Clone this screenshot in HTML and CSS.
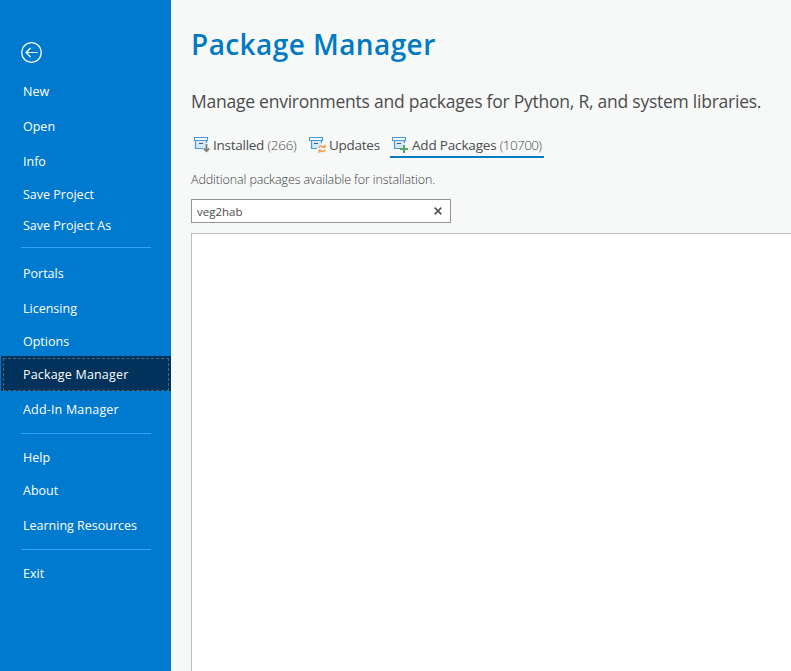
FILE: index.html
```html
<!DOCTYPE html>
<html lang="en">
<head>
<meta charset="utf-8">
<title>Package Manager</title>
<link rel="stylesheet" href="styles.css">
</head>
<body>
<div class="app">
  <nav class="sidebar">
    <a class="back" aria-label="Back"><svg width="22" height="22" viewBox="0 0 22 22" fill="none" stroke="#fff"><circle cx="10.5" cy="10.5" r="9.8" stroke-width="1.3"/><path d="M5 10.5H16.5M9.5 6L5 10.5L9.5 15" stroke-width="1.2"/></svg></a>
    <ul class="group">
      <li><span>New</span></li>
      <li><span>Open</span></li>
      <li><span>Info</span></li>
      <li class="tight"><span>Save Project</span></li>
      <li class="tighter"><span>Save Project As</span></li>
    </ul>
    <ul class="group">
      <li><span>Portals</span></li>
      <li><span>Licensing</span></li>
      <li class="tight"><span>Options</span></li>
      <li class="tight selected"><span class="wide">Package Manager</span></li>
      <li><span class="wide">Add-In Manager</span></li>
    </ul>
    <ul class="group">
      <li><span>Help</span></li>
      <li class="tight"><span>About</span></li>
      <li><span>Learning Resources</span></li>
    </ul>
    <ul class="group">
      <li><span>Exit</span></li>
    </ul>
  </nav>
  <main class="content">
    <h1>Package Manager</h1>
    <p class="lead">Manage environments and packages for Python, R, and system libraries.</p>
    <div class="tabs">
      <div class="tab installed">
        <svg width="18" height="18" viewBox="0 0 18 18" fill="none"><path d="M2.5 4.5H13.5V12.5H2.5Z" fill="#d3e8fa"/><path d="M10 12.5H2.5V4.5M13.5 4.5V7M1.5 1.5H14.5V4.5H1.5Z" stroke="#4a9bd4" stroke-width="1.2"/><path d="M6 7.5H10" stroke="#555"/><path d="M13.5 8V15M10.8 12.5L13.5 15.2L16.2 12.5" stroke="#808080" stroke-width="1.8"/></svg>
        <span class="label">Installed <i>(266)</i></span>
      </div>
      <div class="tab updates">
        <svg width="18" height="18" viewBox="0 0 18 18" fill="none"><path d="M2.5 4.5H12.5V9L9 12.5H2.5Z" fill="#d3e8fa"/><path d="M8 12.5H2.5V4.5M12.5 4.5V7M.5 1.5H13.5V4.5H.5Z" stroke="#4a9bd4" stroke-width="1.2"/><path d="M5 7.5H9" stroke="#555"/><path d="M9.8 12Q10.5 9.8 13.5 9.8L15.5 11M16 8.5V11.5H13M16.2 13.5Q15.5 15.7 12.5 15.7L10.5 14.5M10 17V14H13" stroke="#f09a3e" stroke-width="1.2"/></svg>
        <span class="label">Updates</span>
      </div>
      <div class="tab add">
        <svg width="18" height="18" viewBox="0 0 18 18" fill="none"><path d="M2.5 4.5H12.5V9L9 12.5H2.5Z" fill="#d3e8fa"/><path d="M8 12.5H2.5V4.5M12.5 4.5V7M.5 1.5H13.5V4.5H.5Z" stroke="#4a9bd4" stroke-width="1.2"/><path d="M5 7.5H9" stroke="#555"/><path d="M12 9V17M8 13H16" stroke="#5aa75e" stroke-width="2"/></svg>
        <span class="label">Add Packages <i>(10700)</i></span>
      </div>
    </div>
    <p class="hint">Additional packages available for installation.</p>
    <div class="search"><span>veg2hab</span><svg width="8" height="8" viewBox="0 0 8 8" stroke="#5a5a5a" stroke-width="1.8"><path d="M.7.7L7.3 7.3M7.3.7L.7 7.3"/></svg></div>
    <div class="results"></div>
  </main>
</div>
</body>
</html>
```
FILE: styles.css
```css
* { box-sizing: border-box; }
body { margin: 0; font-family: "Open Sans", "Noto Sans", sans-serif; color: #4c4c4c; background: #f7f9f9; }
.app { display: flex; width: 791px; height: 671px; overflow: hidden; }
.sidebar { width: 171px; flex: none; background: #007acf; color: #fff; padding-top: 42px; font-size: 12.5px; }
.back { display: block; height: 34px; padding-left: 21px; }
.back svg { display: block; }
ul { list-style: none; margin: 0; padding: 0; }
.group li { position: relative; height: 30px; line-height: 32px; padding-left: 23px; margin-top: 5px; white-space: nowrap; }
.group li:first-child { margin-top: 0; }
.group li.tight { margin-top: 3px; }
.group li.tighter { margin-top: 1px; }
.group li span { position: relative; }
.group li .wide { letter-spacing: .18px; }
.group + .group::before { content: ""; display: block; height: 1px; width: 130px; margin: 9px 0 8px 21px; background: #35a4f4; }
.group:nth-of-type(2)::before { margin: 7px 0 10px 21px; }
.selected::before { content: ""; position: absolute; left: 1px; right: 0; top: -3px; height: 35px; background: #00325c; }
.selected::after { content: ""; position: absolute; left: 3px; right: 2px; top: -1px; height: 31px; border: 1px dashed #4b6478; }
.content { flex: 1; min-width: 0; padding: 23px 0 0 20px; display: flex; flex-direction: column; white-space: nowrap; }
h1 { margin: 0; height: 42px; line-height: 42px; font-size: 28px; font-weight: 600; letter-spacing: .42px; color: #007ac2; }
p { margin: 0; }
.lead { height: 30px; line-height: 30px; margin-top: 21px; font-size: 17.5px; letter-spacing: -.24px; }
.tabs { display: flex; height: 26px; margin-top: 16px; }
.tab { display: flex; height: 26px; padding: 4px 2px 0; font-size: 13.5px; letter-spacing: -.26px; }
.tab svg { flex: none; margin-right: 2px; }
.label { line-height: 19px; }
.label i { font-style: normal; font-weight: 300; }
.installed { width: 116px; }
.updates { width: 83px; }
.add { width: 154px; border-bottom: 2px solid #007ac2; letter-spacing: -.18px; }
.add i { letter-spacing: -.6px; }
.hint { height: 20px; line-height: 20px; margin-top: 12px; font-size: 12.5px; font-weight: 300; letter-spacing: -.11px; color: #404040; }
.search { width: 260px; height: 24px; margin-top: 9px; padding: 0 8px 0 5px; border: 1px solid #959595; background: #fff; display: flex; align-items: center; justify-content: space-between; font-size: 11.5px; }
.results { flex: 1; margin-top: 10px; background: #fff; border: solid #bcbebe; border-width: 1px 0 0 1px; }
```
